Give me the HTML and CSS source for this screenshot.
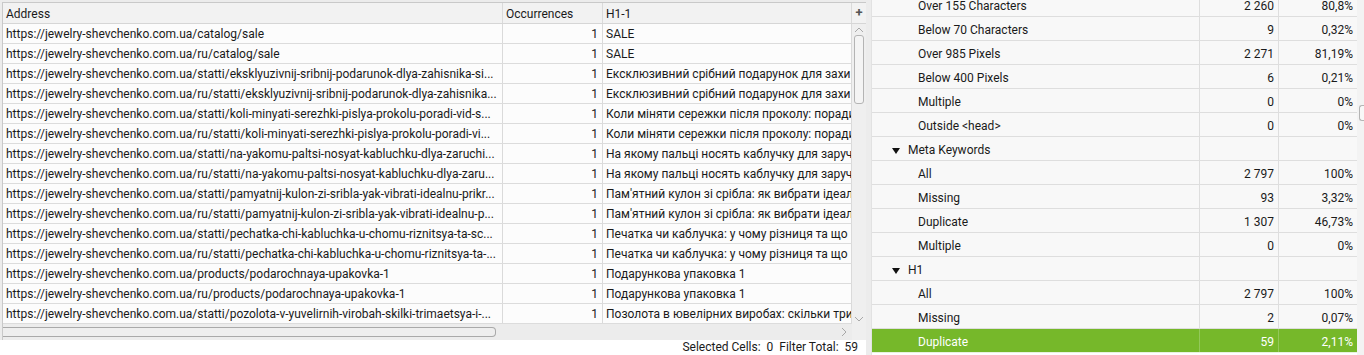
FILE: index.html
```html
<!DOCTYPE html>
<html lang="en">
<head>
    <meta charset="UTF-8">
    <title>H1 Duplicate</title>
    <link rel="stylesheet" href="styles.css">
</head>
<body>

<div class="app">
    <div class="left">
        <div class="table">
            <div class="thead">
                <div class="cell addr">Address</div>
                <div class="cell occ">Occurrences</div>
                <div class="cell h1">H1-1</div>
                <div class="cell plus">+</div>
            </div>
            <div class="tbody">
                <div class="rows">
                    <div class="row"><div class="cell addr">https://jewelry-shevchenko.com.ua/catalog/sale</div><div class="cell occ num">1</div><div class="cell h1">SALE</div></div>
                    <div class="row"><div class="cell addr">https://jewelry-shevchenko.com.ua/ru/catalog/sale</div><div class="cell occ num">1</div><div class="cell h1">SALE</div></div>
                    <div class="row"><div class="cell addr">https://jewelry-shevchenko.com.ua/statti/eksklyuzivnij-sribnij-podarunok-dlya-zahisnika-si...</div><div class="cell occ num">1</div><div class="cell h1">Ексклюзивний срібний подарунок для захи</div></div>
                    <div class="row"><div class="cell addr">https://jewelry-shevchenko.com.ua/ru/statti/eksklyuzivnij-sribnij-podarunok-dlya-zahisnika...</div><div class="cell occ num">1</div><div class="cell h1">Ексклюзивний срібний подарунок для захи</div></div>
                    <div class="row"><div class="cell addr">https://jewelry-shevchenko.com.ua/statti/koli-minyati-serezhki-pislya-prokolu-poradi-vid-s...</div><div class="cell occ num">1</div><div class="cell h1">Коли міняти сережки після проколу: поради</div></div>
                    <div class="row"><div class="cell addr">https://jewelry-shevchenko.com.ua/ru/statti/koli-minyati-serezhki-pislya-prokolu-poradi-vi...</div><div class="cell occ num">1</div><div class="cell h1">Коли міняти сережки після проколу: поради</div></div>
                    <div class="row"><div class="cell addr">https://jewelry-shevchenko.com.ua/statti/na-yakomu-paltsi-nosyat-kabluchku-dlya-zaruchi...</div><div class="cell occ num">1</div><div class="cell h1">На якому пальці носять каблучку для заруч</div></div>
                    <div class="row"><div class="cell addr">https://jewelry-shevchenko.com.ua/ru/statti/na-yakomu-paltsi-nosyat-kabluchku-dlya-zaru...</div><div class="cell occ num">1</div><div class="cell h1">На якому пальці носять каблучку для заруч</div></div>
                    <div class="row"><div class="cell addr">https://jewelry-shevchenko.com.ua/statti/pamyatnij-kulon-zi-sribla-yak-vibrati-idealnu-prikr...</div><div class="cell occ num">1</div><div class="cell h1">Пам'ятний кулон зі срібла: як вибрати ідеал</div></div>
                    <div class="row"><div class="cell addr">https://jewelry-shevchenko.com.ua/ru/statti/pamyatnij-kulon-zi-sribla-yak-vibrati-idealnu-p...</div><div class="cell occ num">1</div><div class="cell h1">Пам'ятний кулон зі срібла: як вибрати ідеал</div></div>
                    <div class="row"><div class="cell addr">https://jewelry-shevchenko.com.ua/statti/pechatka-chi-kabluchka-u-chomu-riznitsya-ta-sc...</div><div class="cell occ num">1</div><div class="cell h1">Печатка чи каблучка: у чому різниця та що</div></div>
                    <div class="row"><div class="cell addr">https://jewelry-shevchenko.com.ua/ru/statti/pechatka-chi-kabluchka-u-chomu-riznitsya-ta-...</div><div class="cell occ num">1</div><div class="cell h1">Печатка чи каблучка: у чому різниця та що</div></div>
                    <div class="row"><div class="cell addr">https://jewelry-shevchenko.com.ua/products/podarochnaya-upakovka-1</div><div class="cell occ num">1</div><div class="cell h1">Подарункова упаковка 1</div></div>
                    <div class="row"><div class="cell addr">https://jewelry-shevchenko.com.ua/ru/products/podarochnaya-upakovka-1</div><div class="cell occ num">1</div><div class="cell h1">Подарункова упаковка 1</div></div>
                    <div class="row"><div class="cell addr">https://jewelry-shevchenko.com.ua/statti/pozolota-v-yuvelirnih-virobah-skilki-trimaetsya-i-...</div><div class="cell occ num">1</div><div class="cell h1">Позолота в ювелірних виробах: скільки три</div></div>
                </div>
                <div class="vscroll">
                    <svg class="arrow" width="10" height="6" viewBox="0 0 10 6"><path d="M1 5 L5 1 L9 5" fill="none" stroke="#a8a8a8" stroke-width="1"/></svg>
                    <div class="vthumb"></div>
                    <div class="vtrack"></div>
                    <svg class="arrow" width="10" height="6" viewBox="0 0 10 6"><path d="M1 1 L5 5 L9 1" fill="none" stroke="#a8a8a8" stroke-width="1"/></svg>
                </div>
            </div>
            <div class="hscroll">
                <div class="hthumb"></div>
                <div class="htrack"></div>
                <svg class="harrow" width="6" height="10" viewBox="0 0 6 10"><path d="M1 1 L5 5 L1 9" fill="none" stroke="#a8a8a8" stroke-width="1"/></svg>
                <div class="corner"></div>
            </div>
        </div>
        <div class="status">Selected Cells:&nbsp; 0&nbsp; Filter Total:&nbsp; 59</div>
    </div>

    <div class="right">
        <div class="summary">
            <div class="srow"><div class="label sub">Over 155 Characters</div><div class="count">2 260</div><div class="pct">80,8%</div></div>
            <div class="srow"><div class="label sub">Below 70 Characters</div><div class="count">9</div><div class="pct">0,32%</div></div>
            <div class="srow"><div class="label sub">Over 985 Pixels</div><div class="count">2 271</div><div class="pct">81,19%</div></div>
            <div class="srow"><div class="label sub">Below 400 Pixels</div><div class="count">6</div><div class="pct">0,21%</div></div>
            <div class="srow"><div class="label sub">Multiple</div><div class="count">0</div><div class="pct">0%</div></div>
            <div class="srow"><div class="label sub">Outside &lt;head&gt;</div><div class="count">0</div><div class="pct">0%</div></div>
            <div class="srow"><div class="label group"><span class="tri"></span>Meta Keywords</div><div class="count"></div><div class="pct"></div></div>
            <div class="srow"><div class="label sub">All</div><div class="count">2 797</div><div class="pct">100%</div></div>
            <div class="srow"><div class="label sub">Missing</div><div class="count">93</div><div class="pct">3,32%</div></div>
            <div class="srow"><div class="label sub">Duplicate</div><div class="count">1 307</div><div class="pct">46,73%</div></div>
            <div class="srow"><div class="label sub">Multiple</div><div class="count">0</div><div class="pct">0%</div></div>
            <div class="srow"><div class="label group"><span class="tri"></span>H1</div><div class="count"></div><div class="pct"></div></div>
            <div class="srow"><div class="label sub">All</div><div class="count">2 797</div><div class="pct">100%</div></div>
            <div class="srow"><div class="label sub">Missing</div><div class="count">2</div><div class="pct">0,07%</div></div>
            <div class="srow selected"><div class="label sub">Duplicate</div><div class="count">59</div><div class="pct">2,11%</div></div>
        </div>
    </div>

    <div class="rscroll">
        <div class="rthumb"></div>
    </div>
</div>

</body>
</html>
```

FILE: styles.css
```css
body {
    margin: 0;
    font-family: Roboto, "Liberation Sans", sans-serif;
    font-size: 12px;
    color: #1a1a1a;
    background-color: #ececec;
}
.app {
    display: flex;
    height: 355px;
    overflow: hidden;
}

/* left pane */
.left {
    width: 866px;
    display: flex;
    flex-direction: column;
    padding-top: 2px;
    padding-left: 2px;
    box-sizing: border-box;
}
.table {
    border-left: 1px solid #c9c9c9;
    border-top: 1px solid #c9c9c9;
    background-color: #fcfcfc;
}
.thead {
    display: flex;
    height: 20px;
    background-color: #f2f2f2;
    border-bottom: 1px solid #d6d6d6;
}
.cell {
    box-sizing: border-box;
    height: 100%;
    line-height: 21px;
    padding: 0 3px;
    white-space: nowrap;
    overflow: hidden;
    border-right: 1px solid #dadada;
}
.thead .cell {
    line-height: 19px;
    padding-top: 2px;
}
.addr { width: 500px; }
.occ { width: 100px; }
.h1 { width: 249px; }
.num { text-align: right; padding-right: 4px; }
.thead .plus {
    width: 14px;
    border-right: none;
    padding: 0;
    line-height: 20px;
    text-align: center;
    font-weight: bold;
    font-size: 13px;
    color: #555;
}
.tbody {
    display: flex;
    height: 300px;
}
.rows {
    width: 849px;
}
.row {
    display: flex;
    height: 20px;
    box-sizing: border-box;
    border-bottom: 1px solid #dcdcdc;
}
.vscroll {
    width: 14px;
    background-color: #efefef;
    display: flex;
    flex-direction: column;
    align-items: center;
    padding: 3px 0 2px;
    box-sizing: border-box;
}
.arrow { flex: none; }
.vthumb {
    width: 8px;
    height: 67px;
    margin-top: 2px;
    border: 1px solid #b4b4b4;
    border-radius: 3px;
    background-color: #f4f4f4;
}
.vtrack { flex: 1; }
.hscroll {
    display: flex;
    align-items: center;
    height: 16px;
    background-color: #ececec;
}
.hthumb {
    width: 492px;
    height: 8px;
    border: 1px solid #a9a9a9;
    border-left: none;
    border-radius: 0 4px 4px 0;
    background-color: #eeeeee;
}
.htrack { flex: 1; }
.harrow {
    margin-right: 5px;
}
.corner {
    width: 14px;
    height: 100%;
    background-color: #efefef;
}
.status {
    flex: 1;
    margin-left: -2px;
    background-color: #ffffff;
    text-align: right;
    padding-right: 8px;
    line-height: 15px;
    font-size: 12px;
}

/* right pane */
.right {
    width: 486px;
    margin-left: 5px;
    background-color: #ffffff;
    border-left: 1px solid #e2e2e2;
    box-sizing: border-box;
    overflow: hidden;
}
.summary {
    margin-top: -7px;
    background-color: #f8f8f8;
}
.srow {
    display: flex;
    height: 24px;
    box-sizing: border-box;
    border-bottom: 1px solid #dedede;
    line-height: 23px;
    font-size: 12px;
}
.label,
.count,
.pct {
    box-sizing: border-box;
    padding-top: 2px;
}
.label {
    width: 328px;
    border-right: 1px solid #dedede;
}
.sub { padding-left: 46px; }
.group {
    padding-left: 20px;
    padding-top: 4px;
    display: flex;
    align-items: center;
}
.tri {
    width: 0;
    height: 0;
    border-left: 4px solid transparent;
    border-right: 4px solid transparent;
    border-top: 6px solid #111;
    margin-right: 8px;
}
.count {
    width: 79px;
    border-right: 1px solid #dedede;
    text-align: right;
    padding-right: 4px;
}
.pct {
    width: 78px;
    text-align: right;
    padding-right: 4px;
}
.selected {
    background-color: #76b82a;
    color: #ffffff;
    border-bottom-color: #e9f2df;
}
.selected .label,
.selected .count {
    border-right-color: #93c85a;
}
.rscroll {
    width: 7px;
    background-color: #f3f3f3;
    padding-top: 105px;
    padding-left: 2px;
    box-sizing: border-box;
}
.rthumb {
    height: 14px;
    border: 1px solid #b4b4b4;
    border-right: none;
    border-radius: 3px 0 0 3px;
    background-color: #f8f8f8;
}
```
